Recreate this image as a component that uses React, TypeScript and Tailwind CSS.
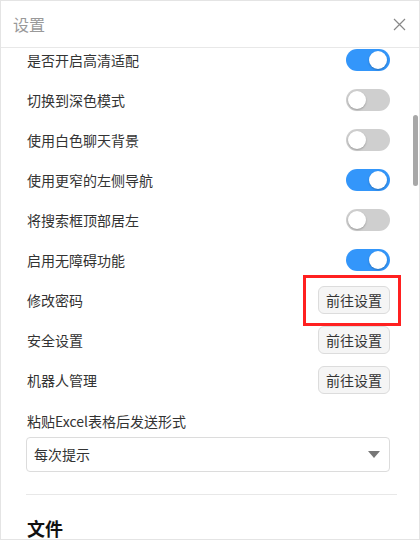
import React from "react";

const toggles: [string, boolean][] = [
  ["是否开启高清适配", true],
  ["切换到深色模式", false],
  ["使用白色聊天背景", false],
  ["使用更窄的左侧导航", true],
  ["将搜索框顶部居左", false],
  ["启用无障碍功能", true],
];

const buttons = ["修改密码", "安全设置", "机器人管理"];

function Toggle({ on }: { on: boolean }) {
  return (
    <div
      className={`relative h-[22px] w-[44px] rounded-full ${on ? "bg-[#3396fa]" : "bg-[#cfcfcf]"}`}
    >
      <div
        className={`absolute top-[2px] h-[18px] w-[18px] rounded-full bg-white shadow-[0_1px_2px_rgba(0,0,0,0.25)] ${on ? "left-[23px]" : "left-[2px]"}`}
      />
    </div>
  );
}

export default function App() {
  return (
    <div
      className="relative flex h-[540px] w-[420px] flex-col overflow-hidden border border-[#e4e4e4] bg-white text-[#333]"
      style={{ fontFamily: '"Noto Sans CJK SC", "Noto Sans", sans-serif' }}
    >
      <div className="flex h-[47px] shrink-0 items-center justify-between border-b border-[#e8e8e8] pl-[12px] pr-[13px]">
        <span className="text-[16px] text-[#999]">设置</span>
        <svg width="13" height="13" viewBox="0 0 13 13" className="text-[#888]">
          <path d="M1 1L12 12M12 1L1 12" stroke="currentColor" strokeWidth="1.2" />
        </svg>
      </div>
      <div className="relative flex-1 overflow-hidden">
        <div className="-mt-[8px] pl-[26px] pr-[29px]">
          {toggles.map(([label, on]) => (
            <div key={label} className="flex h-10 items-center justify-between">
              <span className="text-[14px]">{label}</span>
              <Toggle on={on} />
            </div>
          ))}
          {buttons.map((label) => (
            <div key={label} className="flex h-10 items-center justify-between">
              <span className="text-[14px]">{label}</span>
              <button className="h-[28px] rounded-[6px] border border-[#dcdcdc] bg-[#f5f5f5] px-[7px] text-[14px] text-[#333]">
                前往设置
              </button>
            </div>
          ))}
          <div className="pt-[11px] text-[14px] leading-[20px]">粘贴Excel表格后发送形式</div>
          <div className="-ml-[1px] mt-[6px] flex h-[35px] items-center justify-between rounded-[4px] border border-[#dcdcdc] pl-[7px] pr-[9px]">
            <span className="text-[14px]">每次提示</span>
            <svg width="12" height="7" viewBox="0 0 12 7">
              <path d="M0 0H12L6 7Z" fill="#777" />
            </svg>
          </div>
          <div className="-ml-[1px] -mr-[7px] mt-[22px] h-px bg-[#e8e8e8]" />
          <div className="mt-[19px] text-[18px] font-bold leading-[28px] text-[#111]">文件</div>
        </div>
        <div className="absolute right-[1px] top-[67px] h-[71px] w-[5px] rounded-full bg-[#a8a8a8]" />
      </div>
      <div className="pointer-events-none absolute left-[302px] top-[274px] h-[51px] w-[98px] border-[3px] border-[#ff2020]" />
    </div>
  );
}
